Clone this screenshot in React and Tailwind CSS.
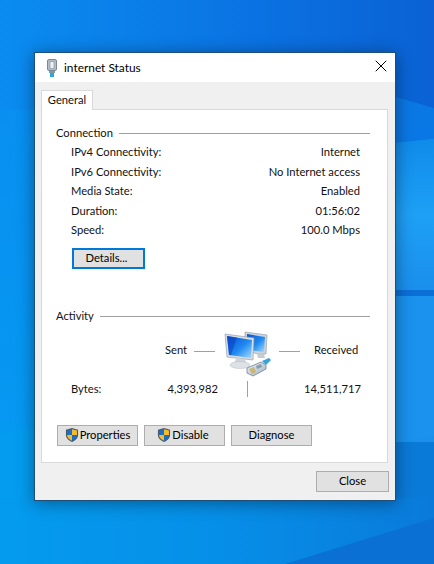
import { X } from 'lucide-react';

const font = { fontFamily: 'Lato, "Noto Sans", sans-serif' };

const stats = [
  { label: 'IPv4 Connectivity:', value: 'Internet' },
  { label: 'IPv6 Connectivity:', value: 'No Internet access' },
  { label: 'Media State:', value: 'Enabled' },
  { label: 'Duration:', value: '01:56:02' },
  { label: 'Speed:', value: '100.0 Mbps' },
];

const Wallpaper = () => (
  <svg className="absolute inset-0 h-full w-full" viewBox="0 0 434 564" preserveAspectRatio="none">
    <defs>
      <linearGradient id="top" x1="0" y1="0" x2="1" y2="0">
        <stop offset="0" stopColor="#0a8cf0" />
        <stop offset="0.6" stopColor="#0a72e2" />
        <stop offset="1" stopColor="#0a62d4" />
      </linearGradient>
      <linearGradient id="pane" x1="0" y1="0" x2="0" y2="1">
        <stop offset="0" stopColor="#0f8bea" />
        <stop offset="0.5" stopColor="#1ea0f6" />
        <stop offset="1" stopColor="#1a8fec" />
      </linearGradient>
      <linearGradient id="bottom" x1="0" y1="0" x2="1" y2="0">
        <stop offset="0" stopColor="#049bee" />
        <stop offset="0.5" stopColor="#068fe8" />
        <stop offset="1" stopColor="#0a7ada" />
      </linearGradient>
      <linearGradient id="left" x1="0" y1="0" x2="0" y2="1">
        <stop offset="0" stopColor="#0a8cf0" />
        <stop offset="1" stopColor="#049cf2" />
      </linearGradient>
    </defs>
    <rect width="434" height="564" fill="url(#left)" />
    <rect width="434" height="110" fill="url(#top)" />
    <polygon points="396,97 434,108 434,139 396,143" fill="#0a78e4" />
    <polygon points="396,143 434,139 434,290 396,290" fill="url(#pane)" />
    <rect x="396" y="290" width="38" height="6" fill="#0b6fd8" />
    <polygon points="396,296 434,296 434,436 396,444" fill="#1a92ee" />
    <polygon points="396,444 434,436 434,448 396,442" fill="#1c8fe8" />
    <rect y="442" x="396" width="38" height="70" fill="#0a7ad8" />
    <polygon points="0,433 34,428 34,500 0,500" fill="#049cee" />
    <rect y="498" width="434" height="66" fill="url(#bottom)" />
    <polygon points="285,564 434,518 434,564" fill="#0a70d4" />
  </svg>
);

const ShieldIcon = () => (
  <svg width="14" height="16" viewBox="0 0 15 16" className="shrink-0">
    <path d="M7.500.5 14 2.500V8c0 3.500-3 6-6.500 7.500C4 14 1 11.500 1 8V2.500Z" fill="#4d5a66" />
    <path d="M7.500 1.800V8H2.200V3.300Z" fill="#1670cc" />
    <path d="M7.500 1.800 12.800 3.300V8H7.500Z" fill="#f7bb2a" />
    <path d="M2.200 8H7.500V14.200C4.800 13 2.200 11 2.200 8Z" fill="#f7bb2a" />
    <path d="M7.500 8H12.800C12.800 11 10.200 13 7.500 14.200Z" fill="#1670cc" />
  </svg>
);

const PlugIcon = () => (
  <svg width="10" height="18" viewBox="0 0 10 18" className="shrink-0">
    <rect x="0.500" y="0.500" width="9" height="11" rx="1.500" fill="#b4bec8" stroke="#7b8894" />
    <rect x="3" y="2.500" width="4" height="7" fill="#eef2f5" stroke="#8794a1" strokeWidth="0.700" />
    <rect x="2" y="12" width="6" height="2" fill="#7d98ad" />
    <rect x="3" y="14" width="4" height="4" fill="#2ba6d8" />
  </svg>
);

const NetworkIcon = () => (
  <svg width="48" height="46" viewBox="0 0 48 46">
    <defs>
      <linearGradient id="screen" x1="0" y1="0" x2="1" y2="1">
        <stop offset="0" stopColor="#0b4fd0" />
        <stop offset="0.55" stopColor="#1f8af0" />
        <stop offset="1" stopColor="#a9dcfb" />
      </linearGradient>
      <linearGradient id="plugBody" x1="0" y1="0" x2="1" y2="1">
        <stop offset="0" stopColor="#f1f4f7" />
        <stop offset="1" stopColor="#9fb0c0" />
      </linearGradient>
    </defs>
    <path d="M22 1 44 4 43 23 34 23 22 18Z" fill="#ccd3da" stroke="#9aa4ae" strokeWidth="0.700" />
    <path d="M24 3 42 6 41 21 24 19Z" fill="url(#screen)" />
    <path d="M34 22 41 23 42 27 35 27Z" fill="#c4cbd2" />
    <path d="M2 3 31 7 30 29 4 26Z" fill="#d8dde3" stroke="#98a2ac" strokeWidth="0.700" />
    <path d="M4 5 29 9 28 27 6 24Z" fill="url(#screen)" />
    <path d="M4 5 14 6.500 8 24 6 24Z" fill="#0a3fc4" opacity="0.550" />
    <path d="M13 27 22 28 23 32 12 31Z" fill="#cfd5db" />
    <ellipse cx="17" cy="34" rx="10" ry="3.500" fill="#dde2e6" stroke="#b3bac1" strokeWidth="0.500" />
    <path d="M24 37 38 31 43 34 43 38 30 45 24 42Z" fill="url(#plugBody)" stroke="#6f8397" strokeWidth="0.800" />
    <path d="M26 38 31 36 33 41 29 43Z" fill="#c9a94a" opacity="0.700" />
    <path d="M33 35 38 33 39 36 34 38Z" fill="#8a9cad" />
    <path d="M39 30 46 27 48 29 43 34Z" fill="#34a3d8" />
  </svg>
);

const Button = ({ children, className, focused }) => (
  <button
    type="button"
    className={`flex items-center justify-center bg-[#e1e1e1] text-[11.200px] text-black ${
      focused ? 'border-2 border-[#0078d7]' : 'border border-[#adadad]'
    } ${className}`}
  >
    {children}
  </button>
);

const SectionTitle = ({ children, className }) => (
  <div className={`flex items-center gap-[6px] ${className}`}>
    <span>{children}</span>
    <span className="h-px flex-1 bg-[#a0a0a0]" />
  </div>
);

const App = () => {
  return (
    <div className="relative h-[564px] w-[434px] overflow-hidden text-[11.200px] text-[#111]" style={font}>
      <Wallpaper />
      <div className="relative ml-[34px] mt-[52px] flex h-[449px] w-[362px] flex-col border border-[#1d4f79] bg-[#f0f0f0] shadow-[0_2px_16px_rgba(0,0,0,0.4)]">
        <div className="flex h-[29px] shrink-0 items-center bg-white pl-[12px] pr-[4px]">
          <PlugIcon />
          <span className="ml-[7px] text-[11.900px] text-black">internet Status</span>
          <X className="mb-[3px] ml-auto h-[20px] w-[20px] text-black" strokeWidth={1.200} />
        </div>

        <div className="pl-[6px] pr-[7px] pt-[8px]">
          <div className="relative z-10 -mb-px flex h-[20px] w-[52px] items-center justify-center border border-b-0 border-[#d9d9d9] bg-white">
            General
          </div>
          <div className="flex h-[354px] flex-col border border-[#d9d9d9] bg-white pl-[14px] pr-[17px]">
            <SectionTitle className="mt-[14px] h-[18px]">Connection</SectionTitle>

            <div className="mt-[1px] flex flex-col pl-[15px] pr-[10px]">
              {stats.map((row) => (
                <div key={row.label} className="flex h-[19.500px] items-center justify-between">
                  <span>{row.label}</span>
                  <span>{row.value}</span>
                </div>
              ))}
            </div>

            <Button focused className="ml-[16px] mt-[7px] h-[21px] w-[73px] pr-[4px]">Details...</Button>

            <SectionTitle className="mt-[39px] h-[18px]">Activity</SectionTitle>

            <div className="mt-[5px] grid h-[46px] grid-cols-[138px_21px_64px_21px_1fr] items-center">
              <span className="pb-[6px] pl-[109px]">Sent</span>
              <span className="mb-[4px] h-px bg-[#a0a0a0]" />
              <span className="flex justify-center"><NetworkIcon /></span>
              <span className="mb-[4px] h-px bg-[#a0a0a0]" />
              <span className="pb-[6px] pl-[14px]">Received</span>
            </div>

            <div className="mt-[3px] grid h-[19px] grid-cols-[147px_1fr_85px] items-center pl-[15px] pr-[9px]">
              <div className="flex justify-between">
                <span>Bytes:</span>
                <span>4,393,982</span>
              </div>
              <span className="mx-auto h-[16px] w-px bg-[#a0a0a0]" />
              <span className="text-right">14,511,717</span>
            </div>

            <div className="ml-[1px] mt-[26px] flex gap-[6px]">
              <Button className="h-[21px] w-[81px]"><ShieldIcon /><span className="ml-px">Properties</span></Button>
              <Button className="h-[21px] w-[81px] pr-[3px]"><ShieldIcon /><span className="ml-px">Disable</span></Button>
              <Button className="h-[21px] w-[81px]">Diagnose</Button>
            </div>
          </div>
        </div>

        <div className="flex justify-end pr-[6px] pt-[8px]">
          <Button className="h-[21px] w-[73px]">Close</Button>
        </div>
      </div>
    </div>
  );
};

export default App;
